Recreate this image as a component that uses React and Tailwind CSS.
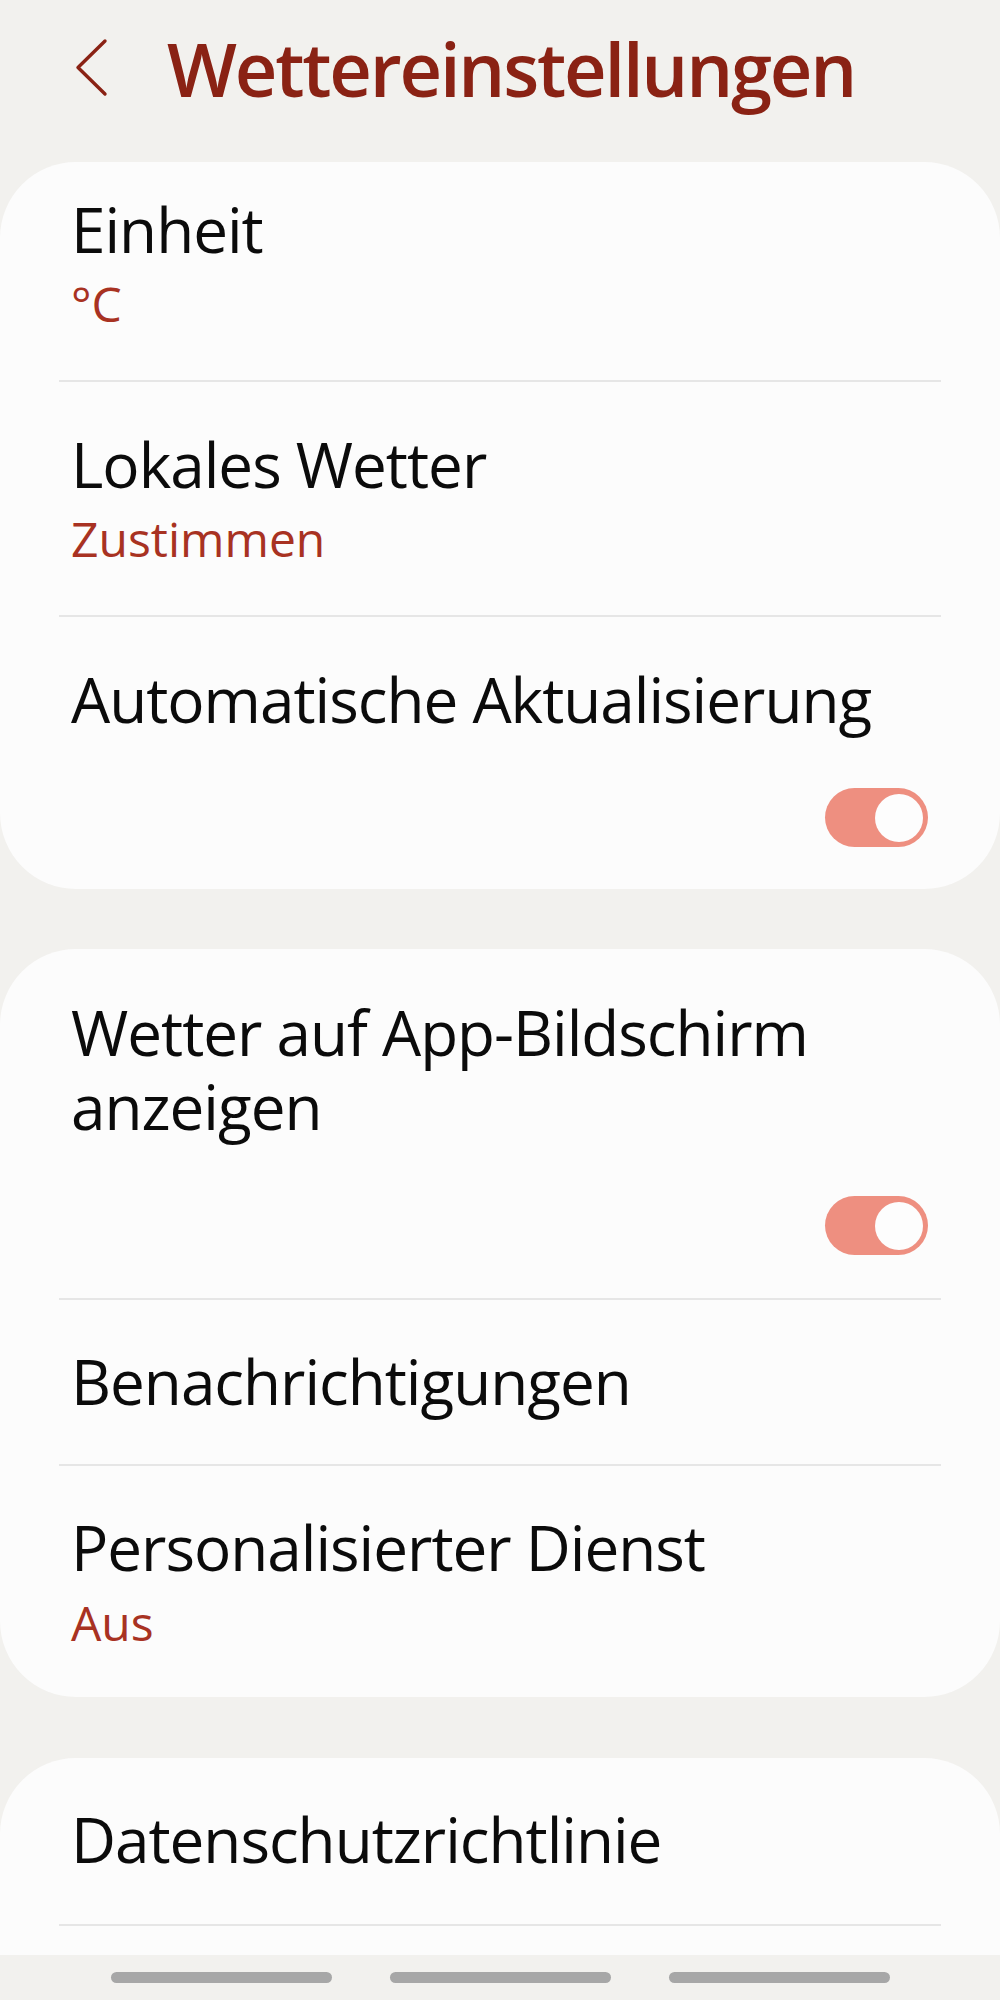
import React from "react";

const font = { fontFamily: '"Open Sans", "Noto Sans", sans-serif' };

function Toggle({ className = "" }) {
  return (
    <div className={"w-[103px] h-[59px] rounded-full bg-[#ee8f80] flex items-center justify-end pr-[5px] " + className}>
      <div className="w-[48px] h-[48px] rounded-full bg-[#fdfdfd]" />
    </div>
  );
}

function Divider() {
  return <div className="h-[2px] bg-[#e6e6e6]" />;
}

function Main({ children }) {
  return (
    <div className="text-[62px] leading-[74px] tracking-[-1px] text-[#0b0b0b]">{children}</div>
  );
}

function Sub({ children }) {
  return <div className="text-[48px] leading-[56px] text-[#a83222]">{children}</div>;
}

export default function App() {
  return (
    <div className="h-[2000px] flex flex-col bg-[#f2f1ee] overflow-hidden" style={font}>
      <div className="flex-1 overflow-hidden flex flex-col">
        {/* Header */}
        <div className="h-[162px] shrink-0 flex items-start pt-[33px] pl-[75px]">
          <svg width="33" height="60" viewBox="0 0 33 60" className="mt-[5px] shrink-0">
            <polyline points="30,3 3,29.5 30,56" fill="none" stroke="#8a2214" strokeWidth="3.4" strokeLinecap="round" strokeLinejoin="round" />
          </svg>
          <h1 className="ml-[59px] text-[74px] leading-[72px] font-semibold tracking-[-2.2px] text-[#8a2214]">
            Wettereinstellungen
          </h1>
        </div>

        {/* Card 1 */}
        <div className="shrink-0 bg-[#fcfcfc] rounded-[76px] px-[59px]">
          <div className="pt-[30px] pb-[48px] pl-[12px] flex flex-col gap-[10px]">
            <Main>Einheit</Main>
            <Sub>°C</Sub>
          </div>
          <Divider />
          <div className="pt-[45px] pb-[48px] pl-[12px] flex flex-col gap-[10px]">
            <Main>Lokales Wetter</Main>
            <Sub>Zustimmen</Sub>
          </div>
          <Divider />
          <div className="pt-[45px] pb-[42px] pl-[12px] flex flex-col">
            <Main>Automatische Aktualisierung</Main>
            <div className="flex justify-end mt-[52px] pr-[13px]">
              <Toggle />
            </div>
          </div>
        </div>

        {/* Card 2 */}
        <div className="shrink-0 mt-[60px] bg-[#fcfcfc] rounded-[76px] px-[59px]">
          <div className="pt-[46px] pb-[43px] pl-[12px] flex flex-col">
            <Main>Wetter auf App-Bildschirm anzeigen</Main>
            <div className="flex justify-end mt-[53px] pr-[13px]">
              <Toggle />
            </div>
          </div>
          <Divider />
          <div className="pt-[44px] pb-[46px] pl-[12px]">
            <Main>Benachrichtigungen</Main>
          </div>
          <Divider />
          <div className="pt-[44px] pb-[46px] pl-[12px] flex flex-col gap-[11px]">
            <Main>Personalisierter Dienst</Main>
            <Sub>Aus</Sub>
          </div>
        </div>

        {/* Card 3 */}
        <div className="shrink-0 mt-[61px] bg-[#fcfcfc] rounded-t-[76px] px-[59px]">
          <div className="pt-[44px] pb-[48px] pl-[12px]">
            <Main>Datenschutzrichtlinie</Main>
          </div>
          <Divider />
          <div className="h-[160px]" />
        </div>
      </div>

      {/* Navigation bar */}
      <div className="h-[45px] shrink-0 bg-[#f2f1ee] flex justify-center gap-[58px] pt-[17px]">
        <div className="w-[221px] h-[11px] rounded-full bg-[#a7a7a7]" />
        <div className="w-[221px] h-[11px] rounded-full bg-[#a7a7a7]" />
        <div className="w-[221px] h-[11px] rounded-full bg-[#a7a7a7]" />
      </div>
    </div>
  );
}
